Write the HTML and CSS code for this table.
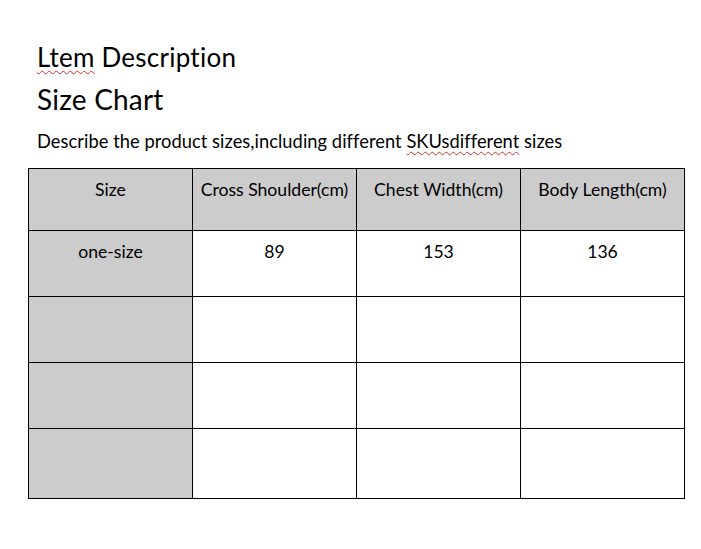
FILE: index.html
```html
<!DOCTYPE html>
<html>
<head>
<meta charset="utf-8">
<link rel="stylesheet" href="styles.css">
</head>
<body>
<div class="page">
  <h1 class="title"><span class="spell">Ltem</span> Description</h1>
  <h2 class="subtitle">Size Chart</h2>
  <p class="desc">Describe the product sizes,including different <span class="spell">SKUsdifferent</span> sizes</p>
  <table class="chart">
    <tr class="head">
      <td class="gray">Size</td>
      <td class="gray">Cross Shoulder(cm)</td>
      <td class="gray">Chest Width(cm)</td>
      <td class="gray">Body Length(cm)</td>
    </tr>
    <tr class="row">
      <td class="gray">one-size</td>
      <td>89</td>
      <td>153</td>
      <td>136</td>
    </tr>
    <tr class="row"><td class="gray"></td><td></td><td></td><td></td></tr>
    <tr class="row"><td class="gray"></td><td></td><td></td><td></td></tr>
    <tr class="row last"><td class="gray"></td><td></td><td></td><td></td></tr>
  </table>
</div>
</body>
</html>
```

FILE: styles.css
```css
html, body {
  margin: 0;
  padding: 0;
  background: #fff;
}
body {
  font-family: Lato, "Open Sans", sans-serif;
  color: #000;
}
.page {
  padding: 41px 0 0 28px;
}
.title {
  margin: 0 0 0 9px;
  font-size: 26px;
  font-weight: 400;
  line-height: 32px;
  letter-spacing: 0.25px;
}
.subtitle {
  margin: 8px 0 0 9px;
  font-size: 28px;
  font-weight: 400;
  line-height: 36px;
  letter-spacing: 0.2px;
}
.desc {
  margin: 12px 0 0 9px;
  font-size: 18.3px;
  line-height: 24px;
  letter-spacing: 0.05px;
}
.spell {
  text-decoration: underline wavy #d0312d;
  text-decoration-thickness: 1px;
  text-underline-offset: 3px;
}
.chart {
  margin-top: 15px;
  border-collapse: collapse;
  width: 657px;
  table-layout: fixed;
}
.chart td {
  border: 1px solid #000;
  width: 164px;
  text-align: center;
  vertical-align: top;
  font-size: 17.6px;
  padding: 10px 2px 0;
  box-sizing: border-box;
}
.chart .head td {
  height: 62px;
}
.chart .row td {
  height: 66px;
}
.chart .row.last td {
  height: 70px;
}
.chart td.gray {
  background: #cccccc;
}
```
